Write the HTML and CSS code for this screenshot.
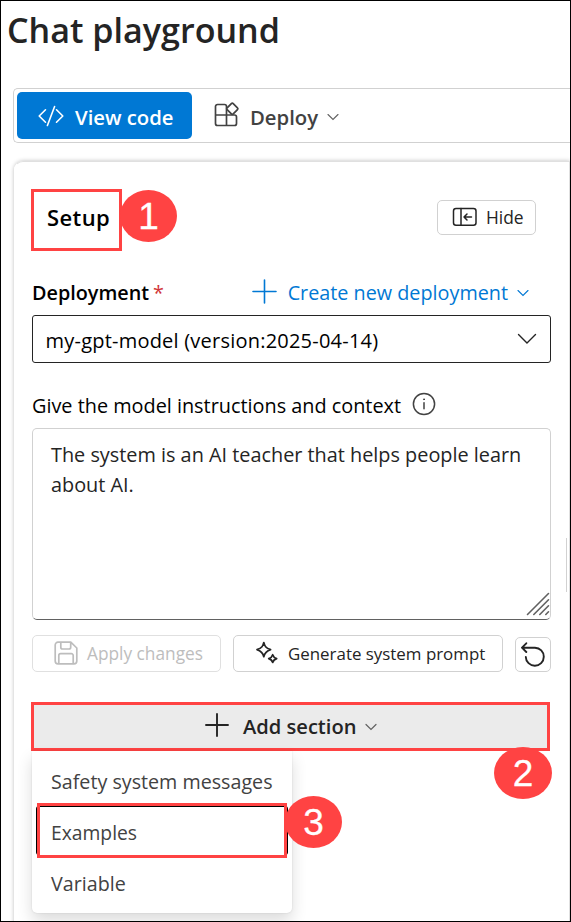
FILE: index.html
```html
<!DOCTYPE html>
<html lang="en">
<head>
<meta charset="utf-8">
<title>Chat playground</title>
<link rel="stylesheet" href="styles.css">
</head>
<body>
<main class="page">
  <h1 class="title">Chat playground</h1>

  <div class="toolbar">
    <button class="view-code">
      <svg width="26" height="22" viewBox="0 0 26 22" fill="none" stroke="#fff" stroke-width="1.6" stroke-linecap="round" stroke-linejoin="round"><path d="M7.5 4.8 1.2 11l6.3 6.2M18.500 4.800 24.800 11l-6.300 6.200M16.600 1.500 9.400 20.500"/></svg>
      <span>View code</span>
    </button>
    <button class="deploy">
      <svg width="26" height="26" viewBox="0 0 26 26" fill="none" stroke="#424242" stroke-width="1.7" stroke-linejoin="round"><path d="M12.500 13V4.500a2 2 0 0 0-2-2h-7a2 2 0 0 0-2 2V21.500a2 2 0 0 0 2 2H20.500a2 2 0 0 0 2-2V15a2 2 0 0 0-2-2H1.500M12.500 13v10.500"/><rect x="14" y="2.400" width="8.600" height="8.600" rx="1.300" transform="rotate(45 18.300 6.700)" fill="#fff"/></svg>
      <span>Deploy</span>
      <svg class="chev" width="12" height="8" viewBox="0 0 12 8" fill="none" stroke="#616161" stroke-width="1.100" stroke-linecap="round"><path d="m1 1.500 5 5 5-5"/></svg>
    </button>
  </div>

  <section class="card">
    <div class="setup-row">
      <div class="setup">Setup<span class="badge badge-one">1</span></div>
      <button class="hide">
        <svg width="26" height="20" viewBox="0 0 26 20" fill="none" stroke="#242424" stroke-width="1.500" stroke-linecap="round" stroke-linejoin="round"><rect x="1.500" y="1.500" width="22.500" height="16.800" rx="2.500"/><path d="M9 1.500v16.800M19.500 10h-7.500M15 7l-3 3 3 3"/></svg>
        <span>Hide</span>
      </button>
    </div>

    <div class="deployment-row">
      <div class="label"><span>Deployment</span><span class="star">*</span></div>
      <div class="create">
        <svg width="25" height="25" viewBox="0 0 25 25" fill="none" stroke="#0078d4" stroke-width="1.600" stroke-linecap="round"><path d="M12.500 1v23M1 12.500h23"/></svg>
        <span>Create new deployment</span>
        <svg class="chev" width="12" height="8" viewBox="0 0 12 8" fill="none" stroke="#0078d4" stroke-width="1.100" stroke-linecap="round"><path d="m1 1.500 5 5 5-5"/></svg>
      </div>
    </div>

    <div class="select">
      <span>my-gpt-model (version:2025-04-14)</span>
      <svg width="20" height="12" viewBox="0 0 20 12" fill="none" stroke="#242424" stroke-width="1.400" stroke-linecap="round"><path d="m1.500 1.500 8.500 8.500 8.500-8.500"/></svg>
    </div>

    <div class="instructions-label">
      <span>Give the model instructions and context</span>
      <svg width="24" height="24" viewBox="0 0 24 24" fill="none" stroke="#424242" stroke-width="1.500" stroke-linecap="round"><circle cx="12" cy="12" r="10.600"/><path d="M12 10.700v6"/><circle cx="12" cy="7.300" r=".5" fill="#424242" stroke-width="1"/></svg>
    </div>

    <div class="textarea">
      <p>The system is an AI teacher that helps people learn about AI.</p>
      <svg class="grip" width="24" height="24" viewBox="0 0 24 24" fill="none" stroke="#616161" stroke-width="1.600" stroke-linecap="round"><path d="M1.500 22.500 22.500 1.500M7.800 22.500 22.500 7.800M13.800 22.500l8.700-8.700M19.800 22.500l2.700-2.700"/></svg>
    </div>

    <div class="actions">
      <button class="apply">
        <svg width="24" height="24" viewBox="0 0 24 24" fill="none" stroke="#bdbdbd" stroke-width="1.700" stroke-linejoin="round"><path d="M4 1.200h12.800l6 5.800v13a2.800 2.800 0 0 1-2.800 2.800H4A2.800 2.800 0 0 1 1.200 20V4A2.800 2.800 0 0 1 4 1.200ZM6.800 1.500v4.700a1.800 1.800 0 0 0 1.800 1.800h6.300a1.800 1.800 0 0 0 1.800-1.800V1.500M4.800 22.500v-8a1.800 1.800 0 0 1 1.800-1.800h10.800a1.800 1.800 0 0 1 1.800 1.800v8"/></svg>
        <span>Apply changes</span>
      </button>
      <button class="generate">
        <svg width="24" height="24" viewBox="0 0 24 24" fill="none" stroke="#242424" stroke-width="1.700" stroke-linejoin="round"><path d="M8.800 1.500c.9 3.500 1.700 5.300 6.800 7.100-4.500 1.400-5.900 3.100-6.800 7.100-.9-4-2.300-5.700-6.800-7.100 5.100-1.800 5.900-3.600 6.800-7.100ZM17.700 13.700c.6 2 1.500 3.200 4 3.900-2.500.7-3.400 1.900-4 3.900-.6-2-1.500-3.200-4-3.900 2.500-.7 3.400-1.900 4-3.900Z"/></svg>
        <span>Generate system prompt</span>
      </button>
      <button class="undo">
        <svg width="26" height="26" viewBox="0 0 26 26" fill="none" stroke="#242424" stroke-width="1.900" stroke-linecap="round" stroke-linejoin="round"><path d="M6.300 1.300 2 5.700l4.300 4.300M2 5.700h13a9 9 0 1 1-9.200 9.200"/></svg>
      </button>
    </div>

    <div class="add-wrap">
      <button class="add">
        <svg width="24" height="24" viewBox="0 0 24 24" fill="none" stroke="#242424" stroke-width="1.900" stroke-linecap="round"><path d="M12 1v22M1 12h22"/></svg>
        <span>Add section</span>
        <svg class="chev" width="12" height="8" viewBox="0 0 12 8" fill="none" stroke="#616161" stroke-width="1.200" stroke-linecap="round"><path d="m1 1.500 5 5 5-5"/></svg>
      </button>
      <span class="badge badge-two">2</span>
      <div class="menu">
        <div class="item">Safety system messages</div>
        <div class="item focused"><span>Examples</span><span class="badge badge-three">3</span></div>
        <div class="item">Variable</div>
      </div>
    </div>
    <i class="scroll-mark"></i>
  </section>
</main>
</body>
</html>
```
FILE: styles.css
```css
* { box-sizing: border-box; }
body {
  margin: 0;
  font: 20px/30px "Open Sans", "Noto Sans", sans-serif;
  color: #000;
  background: #fff;
}
button {
  font: inherit;
  color: inherit;
  margin: 0;
  padding: 0;
  border: 0;
  background: none;
  display: flex;
  align-items: center;
}
svg { display: block; flex: none; }
span { white-space: nowrap; }
.page {
  height: 922px;
  border: 1px solid #000;
  overflow: hidden;
  padding-left: 12px;
}
.title {
  margin: 5px 0 0 -6px;
  height: 48px;
  font-size: 34.1px;
  line-height: 48px;
  font-weight: 600;
  color: #242424;
}
.toolbar {
  margin-top: 34px;
  height: 55px;
  border: 1px solid #d1d1d1;
  border-right: 0;
  border-radius: 5px 0 0 5px;
  padding: 3px;
  display: flex;
  font-weight: 600;
  font-size: 20.3px;
}
.view-code {
  width: 175px;
  height: 47px;
  background: #0078d4;
  color: #fff;
  border-radius: 5px;
  padding-left: 21px;
  gap: 11px;
}
.deploy {
  height: 47px;
  padding-left: 22px;
  gap: 10px;
  color: #424242;
}
.deploy .chev { margin: 2px 0 0 -1px; }
.view-code span, .deploy span { position: relative; top: 1px; }
.deploy svg:first-child { margin-top: -1px; }
.card {
  position: relative;
  margin: 18px 0 0 1px;
  height: 780px;
  border: 1px solid #e0e0e0;
  border-left-color: #fff;
  border-radius: 9px 0 0 0;
  box-shadow: 0 0 4px rgba(0, 0, 0, .26);
  padding: 27px 18px 0 17px;
}
.setup-row {
  display: flex;
  justify-content: space-between;
  align-items: flex-start;
}
.setup {
  position: relative;
  width: 91px;
  height: 62px;
  margin-left: -1px;
  border: 3px solid #ff4343;
  padding: 10px 0 0 13px;
  font-size: 22px;
  font-weight: 600;
  letter-spacing: .4px;
}
.badge {
  position: absolute;
  width: 57px;
  height: 52px;
  border-radius: 50%;
  background: #ff4343;
  color: #fff;
  font: 37px/54px "Liberation Sans", sans-serif;
  -webkit-text-stroke: .3px #fff;
  text-align: center;
  letter-spacing: 0;
}
.badge-one { left: 86px; top: -2px; }
.hide {
  width: 99px;
  height: 35px;
  margin: 11px 15px 0 0;
  border: 1px solid #d1d1d1;
  border-radius: 5px;
  padding: 0 0 1px 14px;
  gap: 8px;
  font-size: 17.4px;
  color: #242424;
}
.deployment-row {
  display: flex;
  justify-content: space-between;
  height: 30px;
  margin-top: 27px;
}
.label {
  display: flex;
  gap: 4px;
  font-weight: 600;
  font-size: 19.8px;
}
.star { color: #d13438; font-weight: 400; }
.create {
  display: flex;
  align-items: center;
  color: #0078d4;
  margin-right: 22px;
}
.create span { margin: 0 9px 0 11px; font-size: 19.8px; }
.create svg:first-child { margin-top: -3px; }
.select {
  margin-top: 7px;
  height: 48px;
  border: 1px solid #242424;
  border-radius: 3px;
  display: flex;
  align-items: center;
  justify-content: space-between;
  padding: 4px 13px 0 12.500px;
  letter-spacing: .22px;
}
.select svg { margin-top: -5px; }
.instructions-label {
  display: flex;
  align-items: center;
  gap: 11px;
  height: 30px;
  margin-top: 28px;
  font-size: 19.85px;
}
.instructions-label svg { margin-top: -5px; }
.textarea {
  position: relative;
  margin-top: 7px;
  height: 192px;
  border: 1px solid #d1d1d1;
  border-bottom-color: #616161;
  border-radius: 5px;
  padding: 11px 18px;
  color: #242424;
  font-size: 19.85px;
}
.textarea p { margin: 0; }
.grip { position: absolute; right: 0; bottom: 3px; }
.actions {
  display: flex;
  align-items: flex-end;
  gap: 12px;
  margin-top: 15px;
  font-size: 17.2px;
  color: #242424;
}
.actions button { border: 1px solid #d1d1d1; border-radius: 5px; height: 37px; }
.actions .apply {
  width: 189px;
  padding: 0 0 0 21px;
  gap: 9px;
  color: #bdbdbd;
  border-color: #e0e0e0;
  font-size: 17.3px;
}
.apply svg { margin-top: -1px; }
.generate { width: 270px; padding-left: 21px; gap: 9px; }
.generate svg { margin-top: -2px; }
.generate span { font-size: 16.9px; }
.actions .undo { width: 36px; height: 35px; padding-left: 4px; }
.add-wrap { position: relative; margin: 30px 0 0 -1px; }
.add {
  width: 519px;
  height: 49px;
  border: 3px solid #ff4343;
  background: #ebebeb;
  color: #242424;
  font-size: 20.1px;
  font-weight: 600;
  padding: 0 0 0 171px;
}
.add span { margin: 0 9px 0 14px; }
.add svg:first-child { margin-top: -4px; }
.badge-two { left: 463px; top: 45px; width: 58px; }
.menu {
  position: absolute;
  z-index: 1;
  left: 1px;
  top: 49px;
  width: 260px;
  height: 162px;
  padding: 5px;
  background: #fff;
  border-radius: 0 0 5px 5px;
  box-shadow: 0 8px 16px rgba(0, 0, 0, .14), 0 0 2px rgba(0, 0, 0, .12);
  color: #424242;
  font-size: 19.7px;
}
.item { position: relative; height: 47px; padding-left: 14px; line-height: 52px; }
.focused {
  width: 250px;
  height: 55px;
  border: 3px solid #ff4343;
  padding-left: 11px;
  line-height: 53px;
  font-size: 19.3px;
  box-shadow: inset 0 1px #000;
}
.focused::before {
  content: "";
  position: absolute;
  z-index: -1;
  inset: 0 -4px;
  border: 1px solid #000;
  border-width: 0 1px;
  border-radius: 3px;
}
.badge-three { left: 245px; top: -10px; }
.scroll-mark {
  position: absolute;
  right: 2px;
  top: 376px;
  width: 1px;
  height: 54px;
  background: #d1d1d1;
}
```
